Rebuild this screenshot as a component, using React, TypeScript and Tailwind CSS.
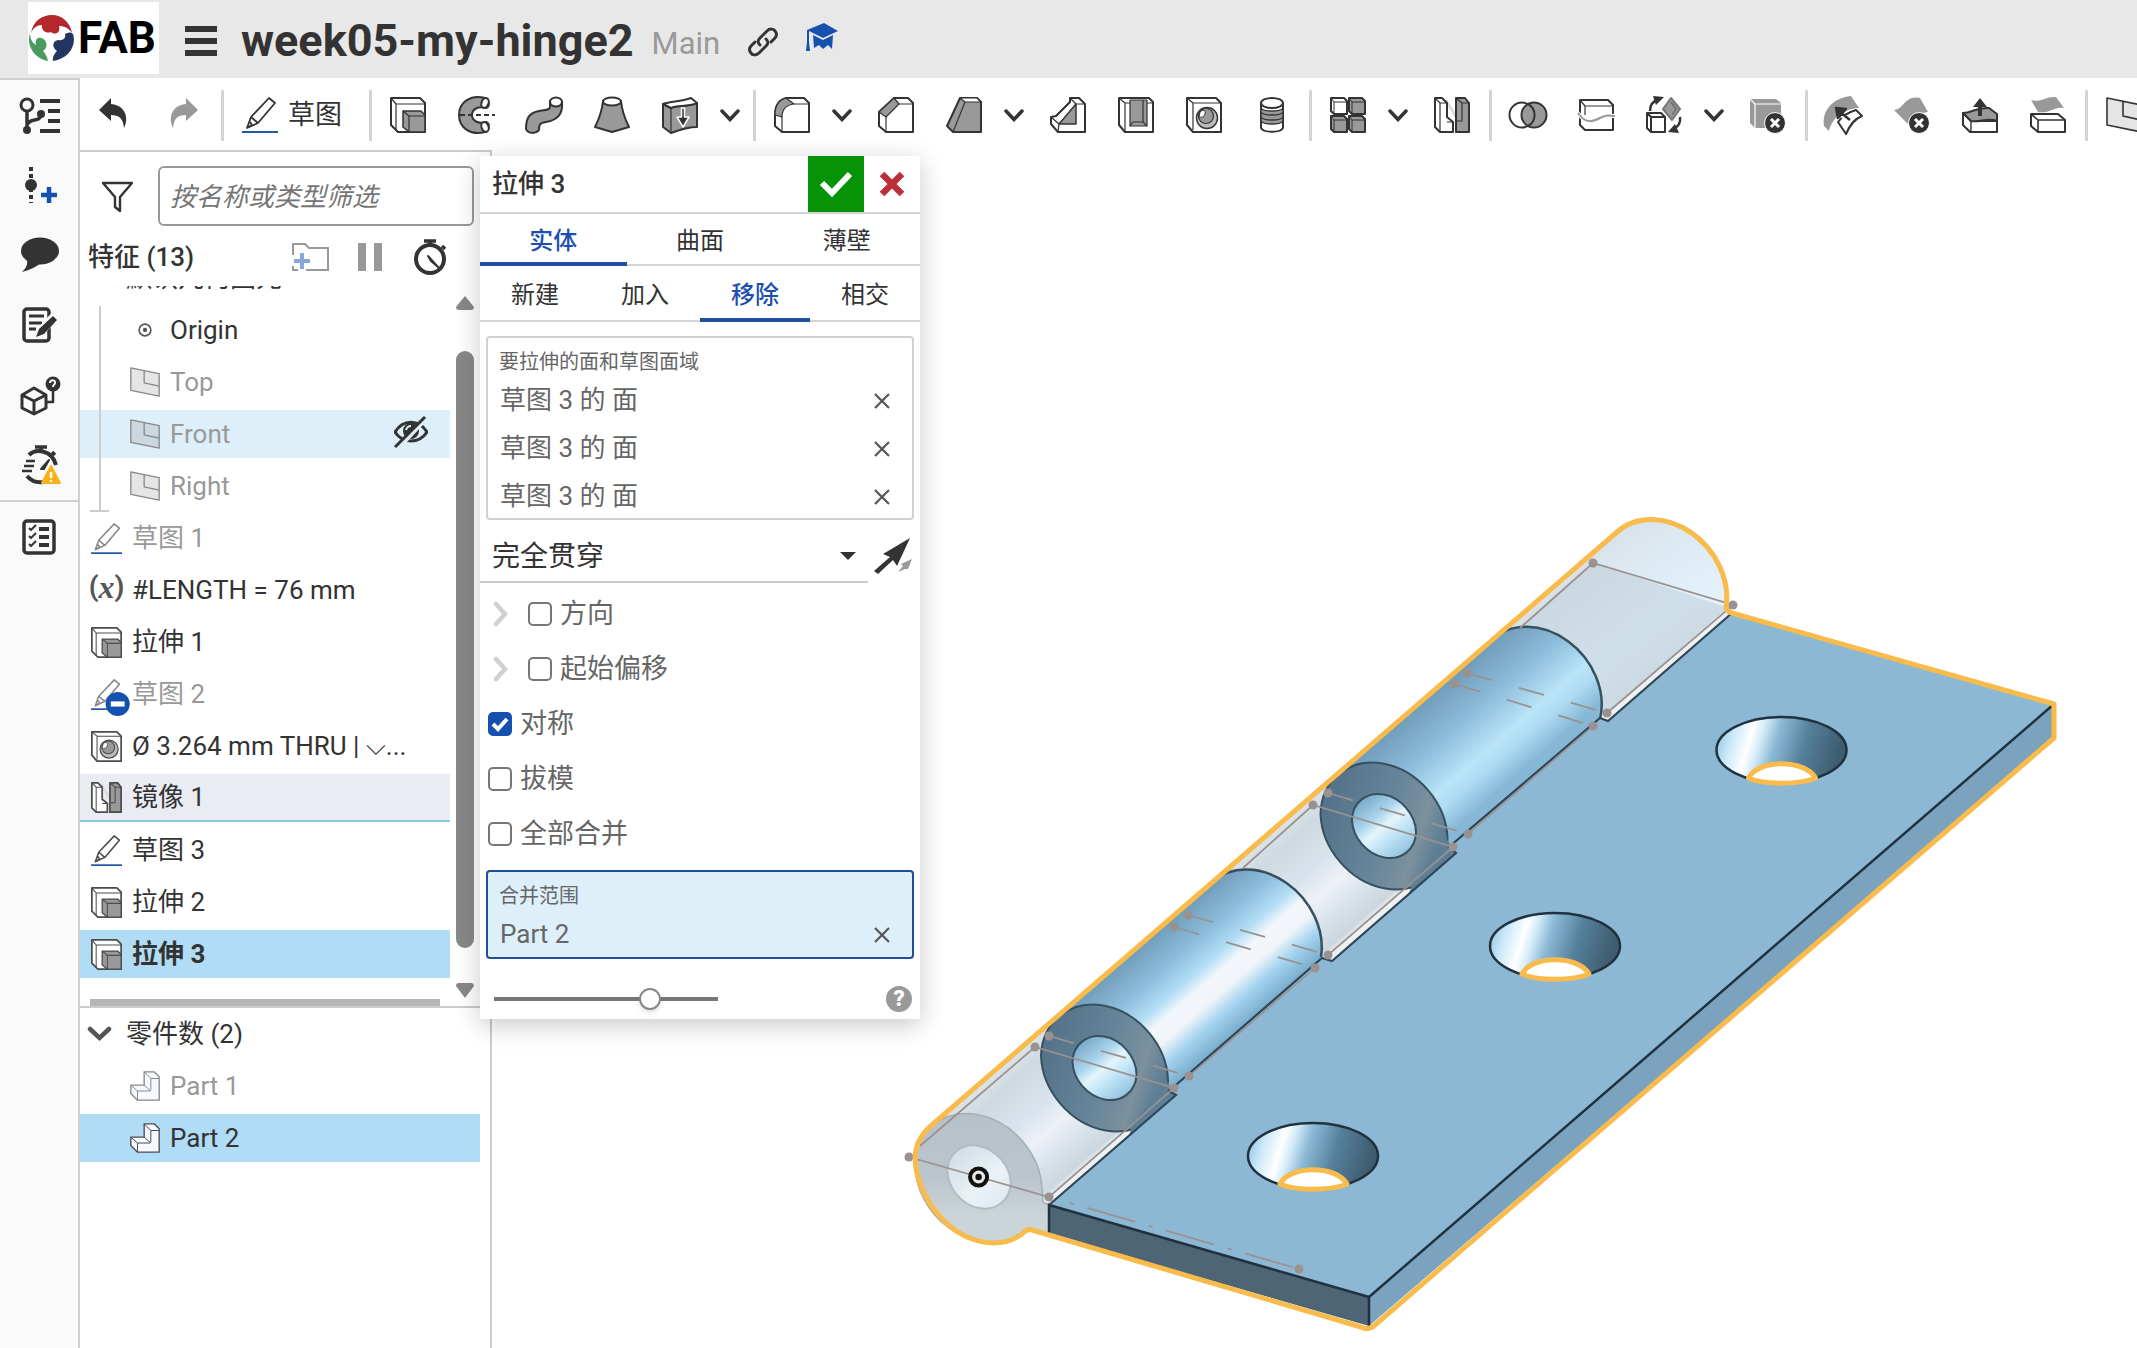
import type { ReactNode } from 'react';

const INK = '#333333';
const GREY = '#999999';
const BLUE = '#1651b0';

function Glyph({ children, size = 36, stroke = INK }: { children: ReactNode; size?: number; stroke?: string }) {
  return (
    <svg
      width={size}
      height={size}
      viewBox="0 0 36 36"
      fill="none"
      stroke={stroke}
      strokeWidth={2}
      strokeLinejoin="round"
      aria-hidden="true"
      className="shrink-0 overflow-visible"
    >
      {children}
    </svg>
  );
}

// ---- solid feature glyphs, all drawn on a 36 unit grid ----

const Sketch = () => (
  <>
    <path d="M5 31 L9 20 L27 1 L33 6 L16 26 Z M9 20 L16 26 M5 31 L10 28 L8 25" fill="#fff" strokeWidth={1.8} />
    <path d="M0 35 H36" stroke="#2457a8" />
  </>
);

const Extrude = () => (
  <>
    <path d="M1 1 H30 L35 6 V35 H8 L1 28 Z" fill="#fff" />
    <path d="M1 1 L6 7 V33 M6 7 H35" strokeWidth={1.2} />
    <path d="M13 14 H31 L35 18 V35 H19 L13 30 Z" fill={GREY} strokeWidth={1.5} />
    <path d="M13 14 L19 19 H35 M19 19 V35" strokeWidth={1.2} />
  </>
);

const Revolve = () => (
  <>
    <path d="M27 1 C13 -3 1 5 1 18 C1 31 13 39 27 35 C32 33 32 26 28 25 C20 27 14 24 14 18 C14 12 20 9 28 11 C32 10 32 3 27 1 Z" fill={GREY} />
    <ellipse cx="27" cy="6" rx="3.5" ry="5" fill="#fff" transform="rotate(20 27 6)" />
    <ellipse cx="27" cy="30" rx="3.5" ry="5" fill="#fff" transform="rotate(-20 27 30)" />
    <path d="M2 18 H37" strokeDasharray="5 3" />
  </>
);

const Sweep = () => (
  <>
    <path d="M24 4 V10 C24 13 20 13 13 14 C3 16 0 21 0 32 C2 37 10 37 13 33 C13 27 14 26 20 25 C31 23 37 18 36 5 Z" fill={GREY} />
    <ellipse cx="30" cy="5" rx="6" ry="4.5" fill="#fff" />
  </>
);

const Loft = () => (
  <>
    <path d="M9 4 C8 15 5 22 1 30 L18 35 L35 30 C31 22 28 15 27 4 Z" fill={GREY} />
    <ellipse cx="18" cy="4.5" rx="9" ry="4" fill="#fff" />
  </>
);

const Thicken = () => (
  <>
    <path d="M1 7 L9 11 C16 8 22 10 35 6 V30 C26 30 20 32 9 36 L1 30 Z" fill={GREY} />
    <path d="M1 7 C10 4 18 5 29 1 L35 6 C24 11 16 7 9 11 Z" fill="#fff" />
    <path d="M9 11 V36" strokeWidth={1.2} />
    <path d="M19.500 11 V20 H15 L21 30 L27 20 H22.500 V11 Z" fill={INK} stroke="#fff" strokeWidth={1.5} />
  </>
);

const Fillet = () => (
  <>
    <path d="M12 1 H30 L35 6 V35 H8 L1 29 V18 C1 9 5 3 12 1 Z" fill="#fff" />
    <path d="M12 1 C5 3 1 9 1 18 L8 20 C8 12 12 8 20 7 Z" fill={GREY} strokeWidth={1.2} />
    <path d="M20 7 H35 M8 20 V35" strokeWidth={1.2} />
  </>
);

const Chamfer = () => (
  <>
    <path d="M16 1 H30 L35 6 V35 H8 L1 29 V15 Z" fill="#fff" />
    <path d="M16 1 L21 7 L8 20 L1 15 Z" fill={GREY} strokeWidth={1.2} />
    <path d="M21 7 H35 M8 20 V35" strokeWidth={1.2} />
  </>
);

const Draft = () => (
  <>
    <path d="M14 1 H31 L35 5 V35 H7 L1 29 Z" fill={GREY} />
    <path d="M14 1 H31 L35 5 H19 Z" fill="#fff" strokeWidth={1.2} />
    <path d="M19 5 L7 35" strokeWidth={1.2} />
  </>
);

const Rib = () => (
  <>
    <path d="M20 1 H29 L35 7 V35 H8 L1 27 V20 L6 19 L20 5 Z" fill="#fff" />
    <path d="M26 7 V27 H9 Z" fill={GREY} strokeWidth={1.5} />
    <path d="M20 1 L26 7 H35 M1 20 L9 27 L8 35 M20 5 L6 19" strokeWidth={1.2} />
  </>
);

const Shell = () => (
  <>
    <path d="M1 1 H31 L35 5 V35 H7 L1 28 Z" fill="#fff" />
    <path d="M1 1 L7 6 V35 M7 6 H12 M29 6 H35" strokeWidth={1.2} />
    <path d="M12 3 H29 V29 H12 Z" fill={GREY} strokeWidth={1.2} />
    <path d="M12 29 L15 25 H25 L29 29 M25 25 V3" strokeWidth={1.2} />
  </>
);

const Hole = () => (
  <>
    <path d="M1 1 H30 L35 6 V35 H7 L1 28 Z" fill="#fff" />
    <path d="M1 1 L7 6 V33 M7 6 H35" strokeWidth={1.2} />
    <circle cx="21" cy="21" r="10.5" fill="#bbb" strokeWidth={1.4} />
    <circle cx="20" cy="19" r="7.5" fill={GREY} strokeWidth={1.2} />
    <path d="M14 15 C17 12 20 13 19 17 C18 20 15 21 13 20 Z" fill="#fff" strokeWidth={1} />
  </>
);

const Thread = () => (
  <>
    <path d="M7 6 V31 C9 36 27 36 29 31 V6" fill="#fff" />
    <path d="M7 11 C9 15 27 15 29 11 V24 C27 28 9 28 7 24 Z" fill={GREY} strokeWidth={1.4} />
    <path d="M7 15 C9 19 27 19 29 15 M7 20 C9 24 27 24 29 20" strokeWidth={1.4} />
    <ellipse cx="18" cy="6" rx="11" ry="5" fill="#fff" />
  </>
);

const Pattern = () => (
  <>
    <path d="M1 1 H14 L17 4 V17 H4 L1 14 Z" fill="#fff" />
    <path d="M19 1 H32 L35 4 V17 H22 L19 14 Z" fill={GREY} />
    <path d="M1 19 H14 L17 22 V35 H4 L1 32 Z" fill={GREY} />
    <path d="M19 19 H32 L35 22 V35 H22 L19 32 Z" fill={GREY} />
    <path d="M1 1 L4 5 H17 M4 5 V17 M19 1 L22 5 H35 M22 5 V17 M1 19 L4 23 H17 M4 23 V35 M19 19 L22 23 H35 M22 23 V35" strokeWidth={1} />
  </>
);

const Mirror = () => (
  <>
    <path d="M12 1 L23 18 V24 L12 6 Z" fill="#ddd" stroke="none" />
    <path d="M1 1 H8 L13 6 V20 L19 25 V35 H6 L1 30 Z" fill="#fff" />
    <path d="M1 1 L6 6 V35 M6 6 H13 M13 25 H19" strokeWidth={1.2} />
    <path d="M22 1 H31 L35 6 V35 H22 Z" fill={GREY} />
    <path d="M22 1 L28 6 H35 M28 6 V24 H22" strokeWidth={1.2} />
  </>
);

const Union = () => (
  <>
    <circle cx="12" cy="18" r="12.5" fill="#fff" />
    <circle cx="24" cy="18" r="12.5" fill={GREY} />
    <path d="M18 7 A12.5 12.5 0 0 1 18 29" />
  </>
);

const Split = () => (
  <>
    <path d="M2 3 H30 L35 8 V33 H7 L2 28 Z" fill="#fff" />
    <path d="M2 3 L7 9 H35 M7 9 V18" strokeWidth={1.2} />
    <path d="M0 16 C8 28 16 24 22 21 C28 18 31 18 37 19" stroke="#fff" strokeWidth={4} />
    <path d="M0 16 C8 28 16 24 22 21 C28 18 31 18 37 19" stroke={GREY} />
  </>
);

const Transform = () => (
  <>
    <path d="M1 16 H15 L19 20 V35 H5 L1 31 Z M1 16 L5 20 H19 M5 20 V35" fill="#fff" />
    <path d="M25 1 L34 12 L26 23 L17 12 Z" fill={GREY} stroke="#777" />
    <path d="M25 5 L30 12 L26 18" stroke="#666" strokeWidth={1.3} />
    <path d="M4 14 C4 7 8 4 12 3" strokeWidth={2.5} />
    <path d="M7 -1 L18 0 L10 8 Z" fill={INK} stroke="none" />
    <path d="M34 20 C35 27 32 30 27 32" strokeWidth={2.5} />
    <path d="M33 36 L22 35 L29 27 Z" fill={INK} stroke="none" />
  </>
);

function Cross() {
  return (
    <>
      <circle cx="25" cy="26" r="10.5" fill={INK} stroke="#fff" strokeWidth={1} />
      <path d="M21 22 L29 30 M29 22 L21 30" stroke="#fff" strokeWidth={3} />
    </>
  );
}

const DeletePart = () => (
  <>
    <path d="M0 2 H26 L31 6 V31 H5 L0 26 Z" fill={GREY} stroke="none" />
    <path d="M0 2 L5 7 H31 M5 7 V31" stroke="#fff" strokeWidth={1.2} />
    <Cross />
  </>
);

const ModifyFillet = () => (
  <>
    <path d="M-2 29 C-4 14 6 1 25 -1 L33 11 C20 11 6 20 3 34 Z" fill={GREY} stroke="none" />
    <path d="M12 25 C17 18 23 15 30 13 L36 19 C28 22 24 28 20 37 Z" fill="#fff" />
    <path d="M22 25 L12 14" strokeWidth={4} stroke="#fff" />
    <path d="M24 23 L14 15 M10 11 L20 12 L12 21 Z" fill={INK} strokeWidth={2.5} />
  </>
);

const DeleteFace = () => (
  <>
    <path d="M0 13 C10 13 10 -2 26 1 L34 15 C24 16 24 22 17 27 L14 27 Z" fill={GREY} stroke="none" />
    <Cross />
  </>
);

const MoveFace = () => (
  <>
    <path d="M1 16 L9 24 H35 V35 H8 L1 28 Z" fill="#fff" />
    <path d="M1 16 C10 16 14 10 27 11 L35 17 V24 C25 20 18 26 9 24 Z" fill={GREY} />
    <path d="M9 24 V35" strokeWidth={1.4} />
    <path d="M18 19 V8" strokeWidth={4} />
    <path d="M11 10 L18 1 L25 10 Z" fill={INK} stroke="none" />
  </>
);

const ReplaceFace = () => (
  <>
    <path d="M1 3 C10 6 16 -1 26 0 L34 11 C24 9 20 17 8 15 Z" fill={GREY} stroke="none" />
    <path d="M1 17 H28 L35 23 V35 H8 L1 29 Z" fill="#fff" />
    <path d="M1 17 L8 23 H35 M8 23 V35" strokeWidth={1.6} />
  </>
);

const Plane = () => (
  <>
    <path d="M1 1 L35 8 V35 L1 28 Z" fill="#888" fillOpacity={0.22} strokeWidth={1.6} />
    <path d="M17 4 V19 L35 23" strokeWidth={1.6} />
  </>
);

const PartIcon = () => (
  <>
    <path d="M17 1 H29 L35 7 V35 H9 L1 27 V17 H17 Z" fill="#f6f9ff" strokeWidth={1.6} />
    <path d="M17 1 L25 9 H35 M25 9 V23 M1 17 L9 24 H24 M9 24 V35 M17 17 L25 24" strokeWidth={1.2} />
  </>
);

const OriginIcon = () => (
  <>
    <circle cx="18" cy="18" r="7" />
    <circle cx="18" cy="18" r="2.6" fill="#555" stroke="none" />
  </>
);

const StopwatchIcon = () => (
  <>
    <circle cx="18" cy="20" r="14" strokeWidth={4} />
    <path d="M12 2 H24 M18 2 V6 M30 7 L33 10" strokeWidth={3.5} />
    <path d="M16 17 L26 28 L19 22 Z" fill={INK} />
  </>
);

// ---- toolbar ----

type Tool = { label: string; icon: ReactNode; more?: boolean };

const TOOL_GROUPS: Tool[][] = [
  [
    { label: 'Extrude', icon: <Extrude /> },
    { label: 'Revolve', icon: <Revolve /> },
    { label: 'Sweep', icon: <Sweep /> },
    { label: 'Loft', icon: <Loft /> },
    { label: 'Thicken', icon: <Thicken />, more: true },
  ],
  [
    { label: 'Fillet', icon: <Fillet />, more: true },
    { label: 'Chamfer', icon: <Chamfer /> },
    { label: 'Draft', icon: <Draft />, more: true },
    { label: 'Rib', icon: <Rib /> },
    { label: 'Shell', icon: <Shell /> },
    { label: 'Hole', icon: <Hole /> },
    { label: 'Thread', icon: <Thread /> },
  ],
  [
    { label: 'Pattern', icon: <Pattern />, more: true },
    { label: 'Mirror', icon: <Mirror /> },
  ],
  [
    { label: 'Boolean', icon: <Union /> },
    { label: 'Split', icon: <Split /> },
    { label: 'Transform', icon: <Transform />, more: true },
    { label: 'Delete part', icon: <DeletePart /> },
  ],
  [
    { label: 'Modify fillet', icon: <ModifyFillet /> },
    { label: 'Delete face', icon: <DeleteFace /> },
    { label: 'Move face', icon: <MoveFace /> },
    { label: 'Replace face', icon: <ReplaceFace /> },
  ],
  [{ label: 'Plane', icon: <Plane /> }],
];

function Divider() {
  return (
    <div className="flex w-2 shrink-0 justify-center">
      <div className="h-[51px] w-[3px] bg-[#d4d4d4]" />
    </div>
  );
}

function ToolButton({ tool }: { tool: Tool }) {
  return (
    <>
      <button type="button" aria-label={tool.label} className="flex h-full w-[68px] shrink-0 items-center justify-center">
        <Glyph>{tool.icon}</Glyph>
      </button>
      {tool.more ? (
        <button type="button" aria-label={`${tool.label} options`} className="flex h-full w-9 shrink-0 items-center pl-1.5">
          <svg width="20" height="13" viewBox="0 0 20 13" fill="none" stroke={INK} strokeWidth={3.5} strokeLinecap="round">
            <path d="M2 2 L10 10.5 L18 2" />
          </svg>
        </button>
      ) : null}
    </>
  );
}

function Toolbar() {
  return (
    <div className="flex h-[70px] items-center overflow-hidden bg-white">
      <button type="button" aria-label="Undo" className="flex h-full w-[70px] shrink-0 items-center justify-center pr-1 pb-1">
        <svg width="28" height="30" viewBox="0 0 28 30" fill={INK}>
          <path d="M0 12 L12 0 V6 C24 7 31 17 25 30 C24 20 20 17 12 17 V23 Z" />
        </svg>
      </button>
      <button type="button" aria-label="Redo" className="flex h-full w-[68px] shrink-0 items-center justify-center pb-1">
        <svg width="28" height="30" viewBox="0 0 28 30" fill={GREY}>
          <path d="M28 12 L16 0 V6 C4 7 -3 17 3 30 C4 20 8 17 16 17 V23 Z" />
        </svg>
      </button>
      <Divider />
      <button type="button" className="flex h-full w-[140px] shrink-0 items-center gap-2.5 pl-4 text-[27px] leading-9">
        <Glyph>
          <Sketch />
        </Glyph>
        草图
      </button>
      {TOOL_GROUPS.map((group, i) => (
        <div key={i} className="flex h-full shrink-0 items-center">
          <Divider />
          {group.map((tool) => (
            <ToolButton key={tool.label} tool={tool} />
          ))}
        </div>
      ))}
    </div>
  );
}

// ---- header ----

function FabLogo() {
  return (
    <div className="flex h-[72px] w-[131px] items-center gap-[3px] bg-white">
      <svg width="47" height="48" viewBox="0 0 47 48" className="shrink-0" aria-hidden="true">
        <path d="M3 19 C5 7 14 1 24 1 C34 1 42 8 44 19 C40 13 35 12 31 12 C33 20 26 21 23 18 C19 20 13 17 14 11 C9 11 5 14 3 19 Z" fill="#b3272d" />
        <path d="M2 19 C-2 32 6 44 20 47 C19 42 17 39 15 37 C20 34 20 26 13 24 C8 23 7 28 8 31 C4 29 2 24 2 19 Z" fill="#4b9a5f" />
        <path d="M45 20 C49 32 40 45 25 47 C24 43 27 39 29 37 C24 34 24 27 30 26 C36 27 38 24 37 20 C40 18 43 18 45 20 Z" fill="#22345f" />
      </svg>
      <span className="text-[44px] font-bold leading-none text-black">FAB</span>
    </div>
  );
}

function Header() {
  return (
    <header className="flex h-[78px] items-center bg-[#e8e8e8] pb-0.5 pl-7">
      <FabLogo />
      <button type="button" aria-label="Menu" className="ml-[26px] flex w-8 flex-col gap-1.5 pt-1.5">
        <span className="h-1.5 bg-[#333]" />
        <span className="h-1.5 bg-[#333]" />
        <span className="h-1.5 bg-[#333]" />
      </button>
      <h1 className="ml-6 pt-1.5 text-[45px] font-bold leading-[48px] text-[#333]">week05-my-hinge2</h1>
      <span className="ml-[18px] pt-3 text-[31px] leading-10 text-[#999]">Main</span>
      <a href="#link" aria-label="Copy link" className="ml-7 pt-2">
        <svg width="30" height="30" viewBox="0 0 30 30" fill="none" stroke={INK} strokeWidth={3} strokeLinecap="round">
          <path d="M12 18 C9 15 10 13 12 11 L19 4 C22 1 26 2 27 4 C29 6 29 9 27 11 L23 15" />
          <path d="M18 12 C21 15 20 17 18 19 L11 26 C8 29 4 28 3 26 C1 24 1 21 3 19 L7 15" />
        </svg>
      </a>
      <a href="#learn" aria-label="Learning center" className="ml-7 pb-0.5">
        <svg width="33" height="29" viewBox="0 0 33 29" fill={BLUE}>
          <path d="M1 7 L18 0 L32 8 L17 15 Z" />
          <path d="M7 12 L17 17 L27 12 L26 26 L22 22 L17 26 L13 22 L8 25 Z" />
          <path d="M1 7 H3 V19 L4 28 H0 L1 19 Z" />
        </svg>
      </a>
    </header>
  );
}

// ---- left rail ----

const RAIL: Tool[] = [
  {
    label: 'Feature list',
    icon: (
      <>
        <circle cx="5" cy="8" r="6" strokeWidth={3} />
        <path d="M5 14 V32 M5 28 C8 20 18 26 19 18" strokeWidth={3.5} />
        <circle cx="5" cy="33" r="4" fill={INK} stroke="none" />
        <circle cx="19" cy="17" r="4" fill={INK} stroke="none" />
        <path d="M18 4 H38 M26 14 H38 M26 24 H38 M18 34 H38" strokeWidth={4} />
      </>
    ),
  },
  {
    label: 'Add version',
    icon: (
      <>
        <path d="M9 0 V36" strokeWidth={4} strokeDasharray="4 3" />
        <circle cx="9" cy="18" r="6" fill={INK} stroke="none" />
        <path d="M27 20 V36 M19 28 H35" stroke={BLUE} strokeWidth={4.5} />
      </>
    ),
  },
  {
    label: 'Comments',
    icon: (
      <>
        <ellipse cx="18" cy="14" rx="19" ry="13.5" fill={INK} stroke="none" />
        <path d="M5 22 C6 28 4 31 0 35 C8 33 14 30 19 26 Z" fill={INK} stroke="none" />
      </>
    ),
  },
  {
    label: 'Notes',
    icon: (
      <>
        <rect x="2" y="2" width="25" height="32" rx="3" strokeWidth={3.5} />
        <path d="M7 9 H22 M7 16 H20 M7 22 H14" strokeWidth={3} />
        <path d="M19 24 L32 10" stroke="#fafafa" strokeWidth={9} />
        <path d="M14 30 L17 22 L31 9 L35 13 L22 27 Z" fill={INK} stroke="none" />
      </>
    ),
  },
  {
    label: 'Configurations',
    icon: (
      <>
        <path d="M0 18 L12 11 L24 18 V31 L12 37 L0 31 Z M0 18 L12 24 L24 18 M12 24 V37" strokeWidth={3} />
        <circle cx="31" cy="7" r="7.5" fill={INK} stroke="none" />
        <path d="M28 6 C28 2 34 3 33 6 C33 8 31 7 31 10" stroke="#fff" />
        <path d="M31 14 V25 H25" strokeWidth={2.5} />
      </>
    ),
  },
  {
    label: 'Simulation',
    icon: (
      <>
        <path d="M7 8 C14 1 30 3 34 18 M5 29 C10 35 16 36 22 35" strokeWidth={4} />
        <path d="M13 0 H25 M19 0 V4 M30 5 L33 8" strokeWidth={3.5} />
        <path d="M4 14 H13 M2 19 H12 M0 24 H10" strokeWidth={2.5} />
        <path d="M19 22 L27 13 L22 22 Z" fill={INK} />
        <path d="M29 19 L38 36 H20 Z" fill="#f9b21c" stroke="#f9b21c" />
        <path d="M29 25 V31 M29 33 V35" stroke="#fff" strokeWidth={2.4} />
      </>
    ),
  },
];

const CHECKLIST = (
  <>
    <rect x="2" y="2" width="30" height="32" rx="3" strokeWidth={3.5} />
    <path d="M7 9 L9 11 L14 6 M7 17 L9 19 L14 14 M7 25 L9 27 L14 22" />
    <path d="M17 10 H27 M17 18 H27 M17 26 H27" strokeWidth={4} />
  </>
);

function Rail() {
  return (
    <nav className="flex w-20 shrink-0 flex-col border-r-2 border-t-2 border-[#d0d0d0] bg-[#fafafa]">
      {RAIL.map((item) => (
        <button key={item.label} type="button" aria-label={item.label} className="flex h-[70px] items-center justify-center pl-0.5">
          <Glyph>{item.icon}</Glyph>
        </button>
      ))}
      <button type="button" aria-label="Checklist" className="flex h-[72px] items-center justify-center border-t-2 border-[#d0d0d0] pl-0.5">
        <Glyph>{CHECKLIST}</Glyph>
      </button>
    </nav>
  );
}

// ---- feature tree ----

type Feature = { name: string; icon: ReactNode; muted?: boolean; row?: string };

const PLANES: Feature[] = [
  { name: 'Origin', icon: <OriginIcon /> },
  { name: 'Top', icon: <Plane />, muted: true },
  { name: 'Front', icon: <Plane />, muted: true, row: 'bg-[#ddeff9]' },
  { name: 'Right', icon: <Plane />, muted: true },
];

const FEATURES: Feature[] = [
  { name: '草图 1', icon: <Sketch />, muted: true },
  { name: '#LENGTH = 76 mm', icon: null },
  { name: '拉伸 1', icon: <Extrude /> },
  {
    name: '草图 2',
    icon: (
      <>
        <Sketch />
        <circle cx="31" cy="29" r="14" fill={BLUE} stroke="none" />
        <path d="M23 29 H39" stroke="#fff" strokeWidth={6} />
      </>
    ),
    muted: true,
  },
  { name: 'Ø 3.264 mm THRU | ⌵...', icon: <Hole /> },
  { name: '镜像 1', icon: <Mirror />, row: 'bg-[#eaecf4] border-b-2 border-[#8fc4e4]' },
  { name: '草图 3', icon: <Sketch /> },
  { name: '拉伸 2', icon: <Extrude /> },
  { name: '拉伸 3', icon: <Extrude />, row: 'bg-[#b0dcf5] font-bold' },
];

function EyeOff() {
  return (
    <svg width="34" height="32" viewBox="0 0 34 32" fill="none" stroke={INK} strokeWidth={3} aria-hidden="true">
      <path d="M1 16 C9 3 25 3 33 16 C25 28 9 28 1 16 Z" />
      <circle cx="17" cy="15" r="6.5" fill={INK} />
      <path d="M12 14 C13 11 15 10 17 10" stroke="#ddeff9" strokeWidth={2} />
      <path d="M3 33 L32 2" stroke="#ddeff9" strokeWidth={5} />
      <path d="M1 31 L31 1" />
    </svg>
  );
}

function FeatureRow({ feature }: { feature: Feature }) {
  return (
    <li className={`flex h-12 items-center gap-2.5 pl-[11px] ${feature.muted ? 'text-[#999]' : ''} ${feature.row ?? ''}`}>
      {feature.icon ? (
        <Glyph size={31} stroke={feature.muted ? '#888' : '#4c4c4c'}>
          {feature.icon}
        </Glyph>
      ) : (
        <span className="flex w-[31px] justify-center pb-1.5 text-[28px] font-bold leading-none text-[#555]">
          (<i className="font-['Liberation_Serif',serif] text-[32px] leading-7">x</i>)
        </span>
      )}
      <span className="whitespace-nowrap">{feature.name}</span>
    </li>
  );
}

function FeaturePanel() {
  return (
    <aside className="flex w-[412px] shrink-0 flex-col border-r-2 border-t-2 border-[#ccc] bg-white text-[26px] leading-9">
      <div className="flex items-center pl-[22px] pr-4 pt-3.5">
        <svg width="31" height="31" viewBox="0 0 31 31" fill="none" stroke={INK} strokeWidth={2.4} strokeLinejoin="round" aria-hidden="true">
          <path d="M1 2 H30 L18 16 V30 L13 26 V16 Z" />
        </svg>
        <input
          type="text"
          aria-label="按名称或类型筛选"
          placeholder="按名称或类型筛选"
          className="ml-[25px] h-[60px] min-w-0 flex-1 rounded-md border-2 border-[#9a9a9a] px-2.5 pt-0.5 italic placeholder:text-[#757575]"
        />
      </div>
      <div className="flex h-[60px] items-center pl-2 pr-[42px] pt-0.5">
        <h2 className="flex-1 font-medium">特征 (13)</h2>
        <button type="button" aria-label="Add folder">
          <svg width="37" height="30" viewBox="0 0 37 30" fill="none" stroke={GREY} strokeWidth={2}>
            <path d="M1 13 V2 H13 L17 6 H36 V28 H14 M1 24 V28 H6" />
            <path d="M10 11 V27 M2 19 H18" stroke="#8aa5d8" strokeWidth={4} />
          </svg>
        </button>
        <button type="button" aria-label="Pause" className="ml-[29px] flex gap-2">
          <span className="h-7 w-2 bg-[#999]" />
          <span className="h-7 w-2 bg-[#999]" />
        </button>
        <button type="button" aria-label="Rebuild times" className="ml-[30px]">
          <Glyph>
            <StopwatchIcon />
          </Glyph>
        </button>
      </div>
      <div className="flex h-[720px] pr-4">
        <div className="flex min-w-0 flex-1 flex-col overflow-hidden">
          <ul className="-mt-8 flex flex-col gap-1">
            <li className="flex h-12 items-center pl-[46px]">默认几何图元</li>
            <li className="relative">
              <ul className="flex flex-col gap-1">
                {PLANES.map((plane) => (
                  <li key={plane.name} className={`flex h-12 items-center gap-2.5 pl-[50px] ${plane.muted ? 'text-[#999]' : ''} ${plane.row ?? ''}`}>
                    <Glyph size={30} stroke={plane.muted ? '#888' : '#555'}>
                      {plane.icon}
                    </Glyph>
                    {plane.name}
                    {plane.row ? (
                      <button type="button" aria-label="Show Front" className="ml-auto mr-[22px] pb-1">
                        <EyeOff />
                      </button>
                    ) : null}
                  </li>
                ))}
              </ul>
              {/* tree guide */}
              <div className="absolute -bottom-0.5 left-[10px] top-0 w-[19px] border-b-2 border-[#ccc]">
                <div className="mx-auto h-full w-0.5 bg-[#ccc]" />
              </div>
            </li>
            {FEATURES.map((feature) => (
              <FeatureRow key={feature.name} feature={feature} />
            ))}
          </ul>
          <div className="ml-2.5 mr-2.5 mt-auto h-[7px] bg-[#b6b6b6]" />
        </div>
        <div className="flex w-6 shrink-0 flex-col items-end pb-2 pt-2.5">
          <svg width="18" height="15" viewBox="0 0 18 15" fill="#888">
            <path d="M9 0 L18 11 Q18 14 15 14 H3 Q0 14 0 11 Z" />
          </svg>
          <div className="mb-[35px] mt-10 w-[18px] flex-1 rounded-full bg-[#888]" />
          <svg width="18" height="15" viewBox="0 0 18 15" fill="#888">
            <path d="M9 15 L18 3 Q18 0 15 0 H3 Q0 0 0 3 Z" />
          </svg>
        </div>
      </div>
      <section className="flex flex-col gap-1 border-t-2 border-[#ccc] pr-2.5 pt-0.5">
        <h2 className="flex h-12 items-center gap-3.5 pl-[7px]">
          <svg width="25" height="16" viewBox="0 0 25 16" fill="none" stroke="#555" strokeWidth={4.5} strokeLinecap="round" aria-hidden="true">
            <path d="M3 3 L12.500 12 L22 3" />
          </svg>
          零件数 (2)
        </h2>
        <ul className="flex flex-col gap-1">
          <li className="flex h-12 items-center gap-2.5 pl-[50px] text-[#999]">
            <Glyph size={30} stroke="#888">
              <PartIcon />
            </Glyph>
            Part 1
          </li>
          <li className="flex h-12 items-center gap-2.5 bg-[#b0dcf5] pl-[50px]">
            <Glyph size={30} stroke="#4c4c4c">
              <PartIcon />
            </Glyph>
            Part 2
          </li>
        </ul>
      </section>
    </aside>
  );
}

// ---- extrude dialog ----

function Tabs({ items, active, height }: { items: string[]; active: string; height: string }) {
  return (
    <div role="tablist" className={`flex ${height} text-2xl leading-8`}>
      {items.map((item) => (
        <button
          key={item}
          type="button"
          role="tab"
          aria-selected={item === active}
          className={`flex-1 ${item === active ? 'border-b-4 border-[#1d4fa3] pt-1.5 font-medium text-[#1d4fb0]' : 'border-b-2 border-[#d4d4d4] pt-1'}`}
        >
          {item}
        </button>
      ))}
    </div>
  );
}

function PickRow({ children }: { children: ReactNode }) {
  return (
    <li className="flex h-12 items-center justify-between pl-3 pr-[22px] text-[#666]">
      {children}
      <button type="button" aria-label="移除" className="pt-0.5">
        <svg width="16" height="16" viewBox="0 0 16 16" fill="none" stroke="#555" strokeWidth={2.2}>
          <path d="M1 1 L15 15 M15 1 L1 15" />
        </svg>
      </button>
    </li>
  );
}

function Check({ label, nested = false, checked = false }: { label: string; nested?: boolean; checked?: boolean }) {
  return (
    <div className="flex h-[55px] items-center pl-2 text-[27px] text-[#666]">
      {nested ? (
        <svg width="40" height="26" viewBox="-5 0 40 26" fill="none" stroke="#d0d0d0" strokeWidth={4.5} strokeLinecap="round" aria-hidden="true">
          <path d="M3 3 L12 13 L3 23" />
        </svg>
      ) : null}
      <label className="flex items-center gap-2">
        <span className="relative flex">
          <input
            type="checkbox"
            defaultChecked={checked}
            className="size-6 appearance-none rounded-[5px] border-2 border-[#777] bg-white checked:border-[#1651b0] checked:bg-[#1651b0]"
          />
          {checked ? (
            <svg viewBox="0 0 24 24" fill="none" stroke="#fff" strokeWidth={4} className="pointer-events-none absolute inset-0 size-6" aria-hidden="true">
              <path d="M5 12 L10 17 L19 7" />
            </svg>
          ) : null}
        </span>
        {label}
      </label>
    </div>
  );
}

function ExtrudeDialog() {
  return (
    <section aria-label="拉伸 3" className="absolute left-[400px] top-1.5 w-[440px] bg-white leading-9 shadow-[0_6px_24px_rgba(0,0,0,0.22)]">
      <div className="flex h-[58px] border-b-2 border-[#d4d4d4]">
        <h2 className="flex flex-1 items-center pl-3 text-[26px] font-medium">拉伸 3</h2>
        <button type="button" aria-label="接受" className="flex size-14 items-center justify-center bg-[#079307]">
          <svg width="34" height="28" viewBox="0 0 34 28" fill="none" stroke="#fff" strokeWidth={6}>
            <path d="M3 13 L13 23 L31 4" />
          </svg>
        </button>
        <button type="button" aria-label="取消" className="flex size-14 items-center justify-center">
          <svg width="26" height="26" viewBox="0 0 26 26" fill="none" stroke="#bb3038" strokeWidth={6.5}>
            <path d="M3 3 L23 23 M23 3 L3 23" />
          </svg>
        </button>
      </div>
      <Tabs items={['实体', '曲面', '薄壁']} active="实体" height="h-[52px]" />
      <Tabs items={['新建', '加入', '移除', '相交']} active="移除" height="h-14" />

      <div className="mx-1.5 mt-3.5 h-[184px] rounded border-2 border-[#d0d0d0] pt-2.5">
        <div className="pl-[11px] text-xl leading-7 text-[#666]">要拉伸的面和草图面域</div>
        <ul className="text-[26px]">
          <PickRow>草图 3 的 面</PickRow>
          <PickRow>草图 3 的 面</PickRow>
          <PickRow>草图 3 的 面</PickRow>
        </ul>
      </div>

      <div className="flex h-[63px] items-center">
        <div className="relative h-full w-[388px] border-b-2 border-[#ccc]">
          <select aria-label="终止类型" className="h-full w-full appearance-none pl-3 pt-3 text-[28px]">
            <option>完全贯穿</option>
          </select>
          <svg width="16" height="8" viewBox="0 0 16 8" fill={INK} className="pointer-events-none absolute right-3 top-8" aria-hidden="true">
            <path d="M0 0 H16 L8 8 Z" />
          </svg>
        </div>
        <button type="button" aria-label="反转方向" className="ml-1.5 pt-2.5">
          <svg width="40" height="37" viewBox="0 0 40 37" fill={INK}>
            <path d="M36 0 L9 16 L16 19 L0 33 L4 36 L19 22 L23 28 Z" />
            <path d="M38 21 L27 26 L29 28 L24 34 L31 31 L34 31 Z" fill={GREY} />
          </svg>
        </button>
      </div>

      <div className="pt-[3px]">
        <Check label="方向" nested />
        <Check label="起始偏移" nested />
        <Check label="对称" checked />
        <Check label="拔模" />
        <Check label="全部合并" />
      </div>

      <div className="mx-1.5 mt-[9px] h-[89px] rounded border-2 border-[#1f4f9c] bg-[#ddf0fa] pt-2.5">
        <div className="pl-[11px] text-xl leading-7 text-[#666]">合并范围</div>
        <ul className="text-[26px]">
          <PickRow>Part 2</PickRow>
        </ul>
      </div>

      <div className="flex h-[60px] items-center justify-between pl-3.5 pr-2 pt-5">
        <input
          type="range"
          aria-label="不透明度"
          defaultValue={72}
          className="h-[23px] w-56 appearance-none bg-transparent [&::-webkit-slider-runnable-track]:h-1 [&::-webkit-slider-runnable-track]:bg-[#777] [&::-webkit-slider-thumb]:-mt-[9px] [&::-webkit-slider-thumb]:size-[22px] [&::-webkit-slider-thumb]:appearance-none [&::-webkit-slider-thumb]:rounded-full [&::-webkit-slider-thumb]:border-2 [&::-webkit-slider-thumb]:border-[#888] [&::-webkit-slider-thumb]:bg-white [&::-webkit-slider-thumb]:shadow-md"
        />
        <button type="button" aria-label="帮助" className="flex size-[26px] items-center justify-center rounded-full bg-[#999] text-[22px] font-black leading-none text-white">
          ?
        </button>
      </div>
    </section>
  );
}

// ---- model view ----

const EDGE = '#20323f';
const RIM = '#37505f';
const OUTLINE = '#f8bb4c';

// barrel cross-section: tilted ellipse centred on the pin axis
function Ring({ x, y, scale = 1, fill, stroke }: { x: number; y: number; scale?: number; fill: string; stroke: string }) {
  const dx = 63.5 * scale;
  const dy = 12.3 * scale;
  const arc = `A ${70.4 * scale} ${58.1 * scale} 49.7 0 1`;
  return <path d={`M${x - dx} ${y - dy} ${arc} ${x + dx} ${y + dy} ${arc} ${x - dx} ${y - dy} Z`} fill={fill} stroke={stroke} strokeWidth={2} />;
}

function Countersink({ x, y }: { x: number; y: number }) {
  return (
    <g transform={`translate(${x} ${y})`}>
      <ellipse rx="65" ry="33" fill="url(#sink)" stroke={EDGE} strokeWidth={2.5} />
      <path d="M-33 28 C-24 9 24 9 34 28 C18 35 -18 35 -33 28 Z" fill="#fff" stroke={OUTLINE} strokeWidth={5} strokeLinejoin="round" />
    </g>
  );
}

const SKETCH_POINTS = [
  [909, 1157], [1035, 1047], [1049, 1036], [1174, 1088], [1189, 1076], [1049, 1197], [1188, 915], [1174, 927], [1315, 968], [1328, 955],
  [1313, 805], [1328, 793], [1468, 834], [1453, 847], [1467, 673], [1455, 684], [1593, 726], [1607, 713], [1593, 563], [1733, 605], [1299, 1269],
];

function HingeModel() {
  return (
    <svg viewBox="492 150 1645 1198" preserveAspectRatio="xMinYMin meet" className="block w-full" role="img" aria-label="Hinge model">
      <defs>
        <linearGradient id="near" gradientUnits="userSpaceOnUse" x1="1058" y1="1015" x2="1150" y2="1121">
          <stop offset="0" stopColor="#6f9bb7" />
          <stop offset="0.25" stopColor="#8dbedd" />
          <stop offset="0.42" stopColor="#b3def5" />
          <stop offset="0.52" stopColor="#f3f7fc" />
          <stop offset="0.64" stopColor="#f1f5fa" />
          <stop offset="0.76" stopColor="#a5d5ef" />
          <stop offset="0.92" stopColor="#7aaecd" />
        </linearGradient>
        <linearGradient id="far" gradientUnits="userSpaceOnUse" x1="1058" y1="1015" x2="1150" y2="1121">
          <stop offset="0" stopColor="#6f9bb7" />
          <stop offset="0.3" stopColor="#8bbbda" />
          <stop offset="0.58" stopColor="#b9e4f8" />
          <stop offset="0.68" stopColor="#aedcf3" />
          <stop offset="0.85" stopColor="#86b8d6" />
        </linearGradient>
        <linearGradient id="ghost" gradientUnits="userSpaceOnUse" x1="1058" y1="1015" x2="1150" y2="1121">
          <stop offset="0" stopColor="#dde5ea" />
          <stop offset="0.15" stopColor="#ced9e1" />
          <stop offset="0.42" stopColor="#dae4ee" />
          <stop offset="0.58" stopColor="#eef1f6" />
          <stop offset="0.75" stopColor="#d8e2eb" />
          <stop offset="0.9" stopColor="#ccd6df" />
          <stop offset="0.95" stopColor="#f2f5f7" />
        </linearGradient>
        <linearGradient id="farGhost" x1="0" y1="0" x2="1" y2="1">
          <stop offset="0" stopColor="#c9d3dc" />
          <stop offset="0.5" stopColor="#cfdfe9" />
          <stop offset="1" stopColor="#c6ced6" />
        </linearGradient>
        <linearGradient id="cap" x1="0" y1="0" x2="1" y2="1">
          <stop offset="0" stopColor="#d5dfe6" />
          <stop offset="0.5" stopColor="#dfebf4" />
          <stop offset="1" stopColor="#e6f2fc" />
        </linearGradient>
        <linearGradient id="face" x1="0.1" y1="0.2" x2="1" y2="0.5">
          <stop offset="0" stopColor="#557489" />
          <stop offset="0.5" stopColor="#66859a" />
          <stop offset="0.8" stopColor="#7c909d" />
          <stop offset="1" stopColor="#5b7d94" />
        </linearGradient>
        <linearGradient id="frontFace" x1="0" y1="0" x2="0" y2="1">
          <stop offset="0" stopColor="#b7c1ca" />
          <stop offset="0.5" stopColor="#bcc5cc" />
          <stop offset="0.8" stopColor="#cbd4d6" />
        </linearGradient>
        <linearGradient id="bore" x1="0.1" y1="0" x2="0.9" y2="1">
          <stop offset="0" stopColor="#6b9ebe" />
          <stop offset="0.35" stopColor="#a9d4ec" />
          <stop offset="0.5" stopColor="#e4f5fc" />
          <stop offset="0.65" stopColor="#c3e6f6" />
          <stop offset="1" stopColor="#85b9d8" />
        </linearGradient>
        <linearGradient id="ghostBore" x1="0" y1="0" x2="1" y2="1">
          <stop offset="0" stopColor="#cdd9e1" />
          <stop offset="0.6" stopColor="#eaf2f8" />
          <stop offset="1" stopColor="#dbe6ed" />
        </linearGradient>
        <linearGradient id="sink" x1="0" y1="0" x2="1" y2="0.15">
          <stop offset="0.02" stopColor="#8cc0e0" />
          <stop offset="0.16" stopColor="#c9e8f8" />
          <stop offset="0.3" stopColor="#ffffff" />
          <stop offset="0.38" stopColor="#d5ecf8" />
          <stop offset="0.5" stopColor="#8cbad6" />
          <stop offset="0.72" stopColor="#55819c" />
          <stop offset="1" stopColor="#3f5d70" />
        </linearGradient>
      </defs>

      {/* removed material */}
      <path d="M933 1124 L1617 532 A70.4 58.1 49.700 0 1 1726 607 L1732 613 L1049 1205 Z" fill="url(#ghost)" />
      <path d="M1593 563 L1728 603 L1732 613 L1607 722 L1598 700 L1521 627 Z" fill="url(#farGhost)" />
      <path d="M1593 563 L1617 532 A70.4 58.1 49.700 0 1 1726 607 Z" fill="url(#cap)" />
      <path d="M1727 608 L1732 613 L1608 721 L1603 717 Z M1453 849 L1453 855 L1332 960 L1328 957 Z M1170 1092 L1176 1095 L1049 1205 L1046 1200 Z" fill="#eef1f3" />

      <path
        d="M915 1165 A70.4 58.1 49.700 0 1 1042 1189 L1043 1202 L1049 1205 V1234 L1027 1229 L1012 1238 A70.4 58.1 49.700 0 1 915 1165 Z"
        fill="url(#frontFace)"
        stroke="#a3adb4"
        strokeWidth={1.5}
      />
      <Ring x={979} y={1177} scale={0.5} fill="url(#ghostBore)" stroke="#b3bcc2" />

      {/* knuckles */}
      <path d="M1338 773 L1491 640 A70.4 58.1 49.700 0 1 1600 719 L1583 746 L1430 879 Z" fill="url(#far)" />
      <path d="M1491 640 A70.4 58.1 49.700 0 1 1600 719" fill="none" stroke={RIM} strokeWidth={2.5} />
      <Ring x={1384} y={826} fill="url(#face)" stroke={RIM} />
      <path d="M1446 838 L1456 853 L1408 896 L1413 882 Z" fill="#5d7f96" />
      <Ring x={1384} y={826} scale={0.505} fill="url(#bore)" stroke={RIM} />

      <path d="M1059 1015 L1212 882 A70.4 58.1 49.700 0 1 1321 957 L1304 989 L1151 1121 Z" fill="url(#near)" />
      <path d="M1212 882 A70.4 58.1 49.700 0 1 1321 957" fill="none" stroke={RIM} strokeWidth={2.5} />
      <Ring x={1104.5} y={1068} fill="url(#face)" stroke={RIM} />
      <path d="M1166 1080 L1176 1095 L1128 1138 L1133 1124 Z" fill="#5d7f96" />
      <Ring x={1104.5} y={1068} scale={0.505} fill="url(#bore)" stroke={RIM} />

      {/* leaf */}
      <path d="M1049 1205 L1176 1095 L1169 1091 L1322 958 L1332 961 L1456 853 L1449 847 L1600 718 L1608 721 L1732 613 L2054 704 L1369 1297 Z" fill="#8cb8d3" />
      <path d="M1049 1205 L1369 1297 V1326 L1049 1234 Z" fill="#4e6575" />
      <path d="M1369 1297 L2054 704 V738 L1369 1326 Z" fill="#7ba3bd" />
      <path d="M1049 1234 V1205 L1369 1297 V1326 M1369 1297 L2054 704" fill="none" stroke={EDGE} strokeWidth={2.5} />
      <path d="M1049 1205 L1176 1095 L1169 1091 L1322 958 L1332 961 L1456 853 L1449 847 L1600 718 L1608 721 L1732 613" fill="none" stroke="#2f4656" strokeWidth={2.2} />

      <Countersink x={1781.5} y={750} />
      <Countersink x={1555} y={946} />
      <Countersink x={1313} y={1156} />

      {/* sketch geometry */}
      <g fill="none" stroke="#999291" strokeWidth={1.8}>
        <path d="M909 1157 L1049 1197 L1174 1088 L1035 1047 L920 1146" />
        <path d="M1243 868 L1313 805 L1453 847 L1328 955" />
        <path d="M1520 628 L1593 563 L1733 605 L1607 713" />
        <path d="M1189 1076 L1315 968 M1468 834 L1593 726" strokeWidth={1.5} />
        <path d="M1049 1036 L1189 1076 M1188 915 L1328 955 M1174 927 L1315 968 M1328 793 L1468 834 M1467 673 L1607 713 M1455 684 L1593 726" strokeDasharray="26 28" />
        <path d="M1070 1203 L1299 1269" strokeDasharray="4 14 50 14" />
      </g>
      <g fill="#999291">
        {SKETCH_POINTS.map(([x, y]) => (
          <circle key={`${x}-${y}`} cx={x} cy={y} r={4.5} />
        ))}
      </g>

      <path
        d="M933 1124 L1617 532 A70.4 58.1 49.700 0 1 1726 607 Q1727 612 1732 613 L2054 704 V738 L1375 1325 Q1369 1331 1361 1327 L1032 1230 Q1027 1228 1022 1234 C1002 1249 970 1245 946 1223 C920 1198 910 1163 918 1143 Q923 1132 933 1124 Z"
        fill="none"
        stroke={OUTLINE}
        strokeWidth={5}
        strokeLinejoin="round"
      />

      <circle cx="978.6" cy="1177" r="8.500" fill="#e8e8e8" stroke="#111" strokeWidth={4} />
      <circle cx="978.6" cy="1177" r="3.200" fill="#111" />
    </svg>
  );
}

export default function App() {
  return (
    <div className="flex min-h-screen flex-col overflow-hidden bg-white font-['Roboto','Noto_Sans_CJK_SC','DejaVu_Sans',sans-serif] text-[#333]">
      <Header />
      <div className="flex flex-1">
        <Rail />
        <div className="flex min-w-0 flex-1 flex-col pt-0.5">
          <Toolbar />
          <main className="relative flex flex-1">
            <FeaturePanel />
            <div className="min-w-0 flex-1 overflow-hidden">
              <HingeModel />
            </div>
            <ExtrudeDialog />
          </main>
        </div>
      </div>
    </div>
  );
}
